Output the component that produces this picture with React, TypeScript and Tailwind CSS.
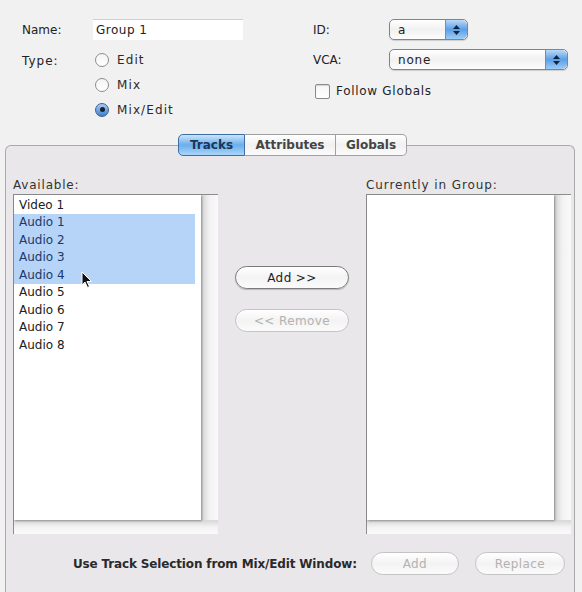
import React from "react";

const font = { fontFamily: '"DejaVu Sans", "Liberation Sans", sans-serif' };

function Radio({ checked, label }: { checked?: boolean; label: string }) {
  return (
    <div className="flex items-center h-[25px]">
      <div
        className={
          "w-[14px] h-[14px] rounded-full border flex items-center justify-center " +
          (checked
            ? "border-[#3b5f94] bg-gradient-to-b from-[#a9cdf3] to-[#3f7fcb]"
            : "border-[#8d8d8d] bg-gradient-to-b from-[#f4f4f4] to-[#ffffff]")
        }
      >
        {checked && <div className="w-[5px] h-[5px] rounded-full bg-[#152235]" />}
      </div>
      <span className="ml-[8px] text-[#2a2a2a] tracking-[1.1px]">{label}</span>
    </div>
  );
}

function Stepper() {
  return (
    <div className="w-[22px] h-full rounded-r-[5px] bg-gradient-to-b from-[#b8d9fa] via-[#5c9fe4] to-[#9cccf8] border-l border-[#6a8fbf] flex flex-col items-center justify-center gap-[2px]">
      <svg width="7" height="4" viewBox="0 0 7 4"><path d="M0 4 L3.5 0 L7 4Z" fill="#10233f" /></svg>
      <svg width="7" height="4" viewBox="0 0 7 4"><path d="M0 0 L3.5 4 L7 0Z" fill="#10233f" /></svg>
    </div>
  );
}

function Popup({ value, w }: { value: string; w: string }) {
  return (
    <div className={"h-[21px] flex rounded-[5px] border border-[#7d8590] bg-gradient-to-b from-[#ffffff] via-[#f1f1f1] to-[#fdfdfd] shadow-[0_1px_1px_rgba(0,0,0,0.15)] " + w}>
      <div className="flex-1 pl-[8px] flex items-center text-[#222] text-[12px] tracking-[0.8px]">{value}</div>
      <Stepper />
    </div>
  );
}

function Pill({ label, disabled, w }: { label: string; disabled?: boolean; w: string }) {
  return (
    <div
      className={
        "h-[23px] rounded-full border flex items-center justify-center text-[12px] tracking-[0.4px] bg-gradient-to-b from-[#ffffff] via-[#f3f3f3] to-[#fbfbfb] " +
        (disabled
          ? "border-[#c4c4c4] text-[#b2b2b2]"
          : "border-[#7a7a7a] text-[#1e1e1e] shadow-[0_1px_1px_rgba(0,0,0,0.2)]") +
        " " +
        w
      }
    >
      {label}
    </div>
  );
}

function ListBox({ items, selected }: { items: string[]; selected: number[] }) {
  return (
    <div className="w-[205px] h-[340px] border-t border-l border-[#8c8c8c] bg-[#f6f6f6] flex flex-col relative">
      <div className="flex flex-1">
        <div className="w-[187px] bg-white pt-[1px] shadow-[1px_1px_2px_rgba(0,0,0,0.35)] relative z-0">
          {items.map((it, i) => (
            <div
              key={it}
              className={
                "h-[17.5px] pl-[5px] flex items-center text-[12px] " +
                (selected.includes(i) ? "bg-[#b6d4f8] text-[#1b3a69] mr-[6px]" : "text-[#202020]")
              }
            >
              {it}
            </div>
          ))}
        </div>
        <div className="flex-1 bg-gradient-to-r from-[#d2d2d2] via-[#f2f2f2] to-[#fafafa]" />
      </div>
      <div className="h-[14px] bg-gradient-to-b from-[#d6d6d6] via-[#f3f3f3] to-[#fafafa]" />
    </div>
  );
}

export default function App() {
  const avail = ["Video 1", "Audio 1", "Audio 2", "Audio 3", "Audio 4", "Audio 5", "Audio 6", "Audio 7", "Audio 8"];
  return (
    <div className="w-[582px] h-[592px] bg-[#f2f1f2] text-[12px] text-[#222] overflow-hidden flex flex-col" style={font}>
      {/* top form */}
      <div className="flex pt-[19px] h-[134px]">
        <div className="w-[290px] pl-[22px]">
          <div className="flex items-center h-[21px]">
            <span className="w-[71px]">Name:</span>
            <div className="w-[150px] h-[21px] bg-white border-t border-[#d0d0d0] pl-[3px] flex items-center tracking-[0.5px]">Group 1</div>
          </div>
          <div className="flex mt-[7px]">
            <span className="w-[73px] pt-[5px] tracking-[1px]">Type:</span>
            <div className="flex flex-col">
              <Radio label="Edit" />
              <Radio label="Mix" />
              <Radio checked label="Mix/Edit" />
            </div>
          </div>
        </div>
        <div className="flex-1 pl-[23px]">
          <div className="flex items-center h-[21px]">
            <span className="w-[76px]">ID:</span>
            <Popup value="a" w="w-[79px]" />
          </div>
          <div className="flex items-center h-[21px] mt-[9px]">
            <span className="w-[76px]">VCA:</span>
            <Popup value="none" w="w-[179px]" />
          </div>
          <div className="flex items-center mt-[12px] ml-[2px]">
            <div className="w-[15px] h-[15px] rounded-[2px] border border-[#8a8a8a] bg-gradient-to-b from-[#f6f6f6] to-[#ffffff] shadow-[inset_0_1px_1px_rgba(0,0,0,0.15)]" />
            <span className="ml-[6px] tracking-[0.7px]">Follow Globals</span>
          </div>
        </div>
      </div>

      {/* tabs */}
      <div className="relative z-10 flex h-[22px] pl-[178px]">
        <div className="w-[67px] h-[22px] rounded-l-[5px] border border-[#3f6ea7] bg-gradient-to-b from-[#c9e5fc] via-[#6aaeea] to-[#a9d6fb] flex items-center justify-center text-[12px] font-bold text-[#1e3556]">
          Tracks
        </div>
        <div className="w-[91px] h-[22px] border-y border-r border-[#a0a0a0] bg-gradient-to-b from-[#ffffff] via-[#f1f1f1] to-[#fbfbfb] flex items-center justify-center text-[12px] font-bold text-[#444]">
          Attributes
        </div>
        <div className="w-[71px] h-[22px] rounded-r-[5px] border-y border-r border-[#a0a0a0] bg-gradient-to-b from-[#ffffff] via-[#f1f1f1] to-[#fbfbfb] flex items-center justify-center text-[12px] font-bold text-[#444]">
          Globals
        </div>
      </div>

      {/* panel */}
      <div className="-mt-[11px] ml-[5px] mr-[7px] flex-1 rounded-t-[6px] border-t border-x border-[#a9a8aa] bg-[#e9e7ea] flex flex-col pl-[7px] pr-[3px] pt-[30px]">
        <div className="flex">
          <div className="flex flex-col">
            <span className="h-[18px] text-[#333] tracking-[0.8px]">Available:</span>
            <div className="relative">
              <ListBox items={avail} selected={[1, 2, 3, 4]} />
              <svg className="absolute left-[68px] top-[77px]" width="12" height="18" viewBox="0 0 12 18">
                <path d="M1 1 L1 14 L4 11 L6.5 16.5 L8.5 15.5 L6 10.5 L10.5 10.5 Z" fill="#111" stroke="#fff" strokeWidth="1" />
              </svg>
            </div>
          </div>
          <div className="flex-1 flex flex-col items-center pt-[90px]">
            <Pill label="Add >>" w="w-[114px]" />
            <div className="h-[20px]" />
            <Pill label="<< Remove" disabled w="w-[114px]" />
          </div>
          <div className="flex flex-col">
            <span className="h-[18px] text-[#333] tracking-[0.9px]">Currently in Group:</span>
            <ListBox items={[]} selected={[]} />
          </div>
        </div>
        <div className="flex items-center mt-[18px] pl-[60px]">
          <span className="text-[#2a2a2a] font-bold tracking-[-0.15px]">Use Track Selection from Mix/Edit Window:</span>
          <div className="ml-[14px]">
            <Pill label="Add" disabled w="w-[88px]" />
          </div>
          <div className="ml-[16px]">
            <Pill label="Replace" disabled w="w-[90px]" />
          </div>
        </div>
      </div>
    </div>
  );
}
